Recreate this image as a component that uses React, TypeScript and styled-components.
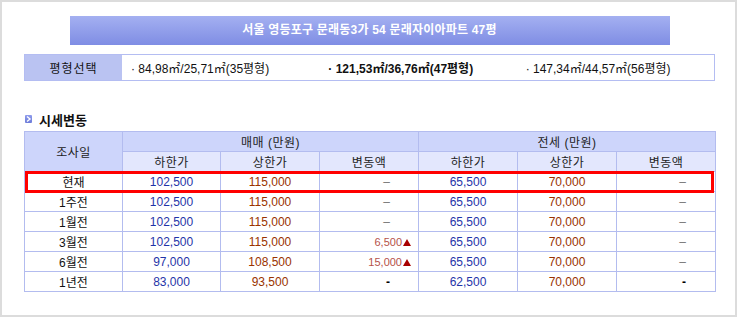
import React from 'react'
import styled, { createGlobalStyle } from 'styled-components'

const GlobalStyle = createGlobalStyle`
  body {
    margin: 0;
    background: #fff;
    font-family: "Liberation Sans", "Noto Sans CJK KR", sans-serif;
    font-size: 12px;
    color: #111;
  }
`

type Change = { value?: string; strong?: boolean }

type PriceRow = {
  date: string
  saleLow: string
  saleHigh: string
  saleChange: Change
  rentLow: string
  rentHigh: string
  rentChange: Change
  current?: boolean
}

const ROWS: PriceRow[] = [
  { date: '현재', saleLow: '102,500', saleHigh: '115,000', saleChange: {}, rentLow: '65,500', rentHigh: '70,000', rentChange: {}, current: true },
  { date: '1주전', saleLow: '102,500', saleHigh: '115,000', saleChange: {}, rentLow: '65,500', rentHigh: '70,000', rentChange: {} },
  { date: '1월전', saleLow: '102,500', saleHigh: '115,000', saleChange: {}, rentLow: '65,500', rentHigh: '70,000', rentChange: {} },
  { date: '3월전', saleLow: '102,500', saleHigh: '115,000', saleChange: { value: '6,500' }, rentLow: '65,500', rentHigh: '70,000', rentChange: {} },
  { date: '6월전', saleLow: '97,000', saleHigh: '108,500', saleChange: { value: '15,000' }, rentLow: '65,500', rentHigh: '70,000', rentChange: {} },
  { date: '1년전', saleLow: '83,000', saleHigh: '93,500', saleChange: { strong: true }, rentLow: '62,500', rentHigh: '70,000', rentChange: { strong: true } },
]

const SIZES = [
  { label: '84,98㎡/25,71㎡(35평형)' },
  { label: '121,53㎡/36,76㎡(47평형)', active: true },
  { label: '147,34㎡/44,57㎡(56평형)' },
]

const App = () => (
  <>
    <GlobalStyle />
    <Frame>
      <TitleBar>서울 영등포구 문래동3가 54 문래자이아파트 47평</TitleBar>

      <SizeRow>
        <SizeLabel>평형선택</SizeLabel>
        {SIZES.map((s) => (
          <SizeOption key={s.label} $active={s.active}>
            · {s.label}
          </SizeOption>
        ))}
      </SizeRow>

      <SectionHead>
        <Bullet>
          <svg width="7" height="8" viewBox="0 0 7 8">
            <path d="M2 1.5 L5 4 L2 6.5" fill="none" stroke="#fff" strokeWidth="1.4" />
          </svg>
        </Bullet>
        시세변동
      </SectionHead>

      <TableWrap>
        <PriceTable>
          <colgroup>
            <col style={{ width: 98 }} />
            <col style={{ width: 98 }} />
            <col style={{ width: 99 }} />
            <col style={{ width: 99 }} />
            <col style={{ width: 99 }} />
            <col style={{ width: 99 }} />
            <col style={{ width: 99 }} />
          </colgroup>
          <thead>
            <tr>
              <GroupTh rowSpan={2}>조사일</GroupTh>
              <GroupTh colSpan={3}>매매 (만원)</GroupTh>
              <GroupTh colSpan={3}>전세 (만원)</GroupTh>
            </tr>
            <tr>
              <SubTh>하한가</SubTh>
              <SubTh>상한가</SubTh>
              <SubTh>변동액</SubTh>
              <SubTh>하한가</SubTh>
              <SubTh>상한가</SubTh>
              <SubTh>변동액</SubTh>
            </tr>
          </thead>
          <tbody>
            {ROWS.map((r) => (
              <Row key={r.date} $current={r.current}>
                <Cell>{r.date}</Cell>
                <Cell $tone="low">{r.saleLow}</Cell>
                <Cell $tone="high">{r.saleHigh}</Cell>
                <ChangeCell change={r.saleChange} />
                <Cell $tone="low">{r.rentLow}</Cell>
                <Cell $tone="high">{r.rentHigh}</Cell>
                <ChangeCell change={r.rentChange} wide />
              </Row>
            ))}
          </tbody>
        </PriceTable>
        <Highlight />
      </TableWrap>
    </Frame>
  </>
)

const ChangeCell = ({ change, wide }: { change: Change; wide?: boolean }) =>
  change.value ? (
    <DeltaCell>
      <DeltaValue>{change.value}</DeltaValue>
      <Up width="8" height="7" viewBox="0 0 8 7">
        <path d="M4 0 L8 7 L0 7 Z" fill="#a80000" />
      </Up>
    </DeltaCell>
  ) : (
    <DashCell $strong={change.strong} $wide={wide}>
      {change.strong ? '-' : '–'}
    </DashCell>
  )

const Frame = styled.div`
  width: 737px;
  height: 317px;
  box-sizing: border-box;
  border: 2px solid #dcdcdc;
  padding: 14px 20px 0 22px;
`

const TitleBar = styled.div`
  width: 600px;
  height: 29px;
  margin: 0 auto;
  background: linear-gradient(#a4b0f1, #7f8de4);
  color: #fff;
  font-weight: bold;
  font-size: 12px;
  letter-spacing: 0.2px;
  line-height: 29px;
  text-align: center;
`

const SizeRow = styled.div`
  display: flex;
  height: 27px;
  margin-top: 9px;
  box-sizing: border-box;
  border: 1px solid #b4bdf2;
`

const SizeLabel = styled.div`
  width: 97px;
  background: #bac3f2;
  display: flex;
  align-items: center;
  justify-content: center;
  font-size: 12px;
  letter-spacing: 1px;
`

const SizeOption = styled.div<{ $active?: boolean }>`
  flex: 1;
  display: flex;
  align-items: center;
  padding-left: 9px;
  font-size: 12px;
  font-weight: ${({ $active }) => ($active ? 'bold' : 'normal')};
  color: #111;
`

const SectionHead = styled.div`
  display: flex;
  align-items: center;
  gap: 7px;
  height: 16px;
  margin-top: 30px;
  font-size: 13px;
  font-weight: bold;
  color: #111;
`

const Bullet = styled.span`
  display: inline-flex;
  align-items: center;
  justify-content: center;
  width: 7px;
  height: 8px;
  margin-left: 1px;
  background: linear-gradient(#8f9cec, #6c7bd8);
  border-radius: 1px;
`

const TableWrap = styled.div`
  position: relative;
  margin-top: 4px;
  width: 691px;
`

const PriceTable = styled.table`
  width: 691px;
  border-collapse: collapse;
  table-layout: fixed;

  th,
  td {
    border: 1px solid #b3bcef;
    padding: 0;
    height: 19px;
    font-size: 12px;
    font-weight: normal;
    text-align: center;
    white-space: nowrap;
  }
`

const GroupTh = styled.th`
  && {
    background: #cdd5fb;
    color: #222;
    letter-spacing: 0.5px;
  }
`

const SubTh = styled.th`
  && {
    background: #e3e7fd;
    color: #222;
    letter-spacing: 0.5px;
  }
`

const Row = styled.tr<{ $current?: boolean }>`
  td {
    background: #fff;
  }
  ${({ $current }) =>
    $current &&
    `
    td + td { border-left-color: #d4d4d4; }
  `}
`

const TONES = { low: '#1f34a8', high: '#993300', plain: '#111' }

const Cell = styled.td<{ $tone?: keyof typeof TONES }>`
  color: ${({ $tone = 'plain' }) => TONES[$tone]};
`

const DeltaCell = styled.td`
  && {
    text-align: right;
    padding-right: 7px;
  }
`

const DeltaValue = styled.span`
  font-size: 11px;
  color: #b5524a;
`

const Up = styled.svg`
  margin-left: 1px;
  vertical-align: 0;
`

const DashCell = styled.td<{ $strong?: boolean; $wide?: boolean }>`
  && {
    text-align: right;
    padding-right: ${({ $wide }) => ($wide ? '29px' : '28px')};
    color: ${({ $strong }) => ($strong ? '#000' : '#777')};
    font-weight: ${({ $strong }) => ($strong ? 'bold' : 'normal')};
  }
`

const Highlight = styled.div`
  position: absolute;
  left: 1px;
  top: 40px;
  width: 689px;
  height: 22px;
  box-sizing: border-box;
  border: 3px solid #ff0000;
  pointer-events: none;
`

export default App
